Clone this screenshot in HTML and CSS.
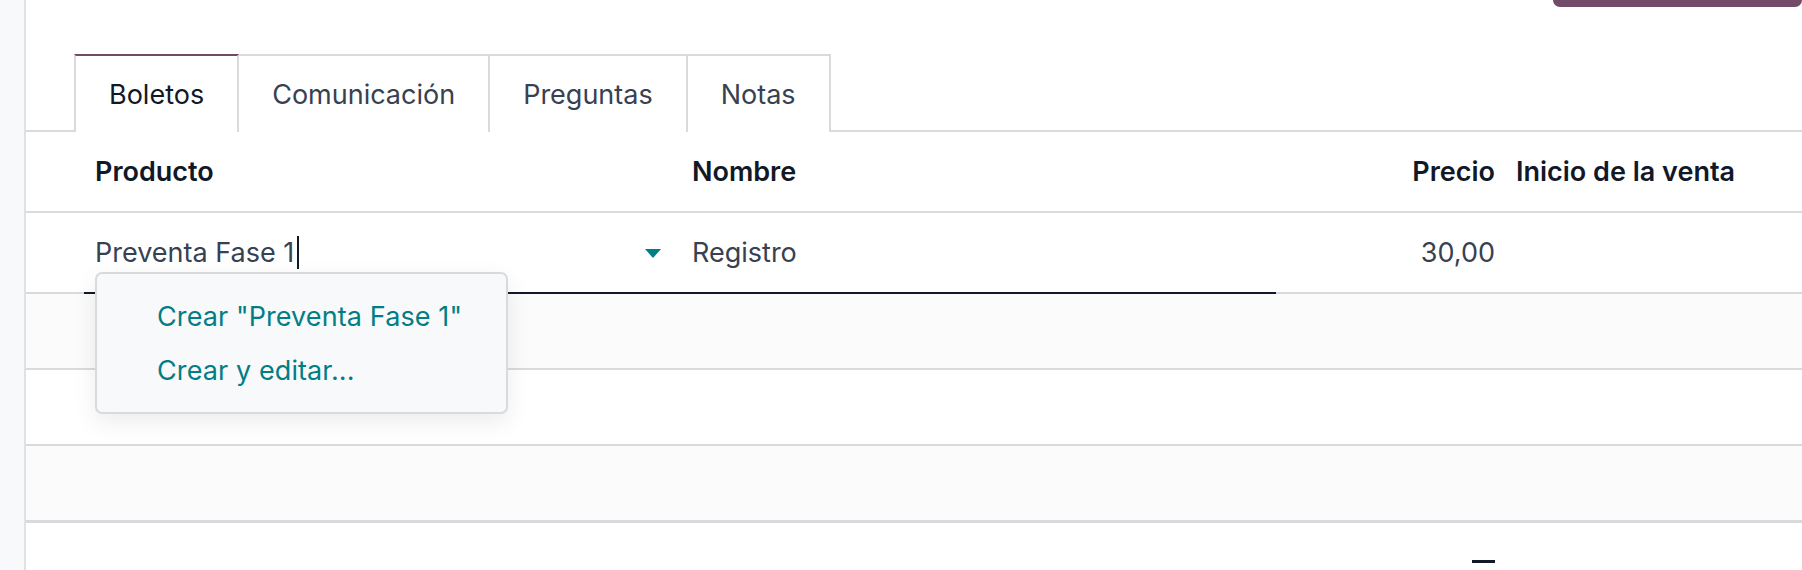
FILE: index.html
```html
<!DOCTYPE html>
<html lang="es">
<head>
<meta charset="utf-8">
<title>Boletos</title>
<link rel="stylesheet" href="styles.css">
</head>
<body>
<div class="app">
  <aside class="gutter"></aside>
  <main class="sheet">
    <div class="topbar"><span class="btn-primary"></span></div>
    <ul class="tabs">
      <li class="tab active">Boletos</li>
      <li class="tab">Comunicación</li>
      <li class="tab">Preguntas</li>
      <li class="tab">Notas</li>
    </ul>
    <div class="list">
      <div class="row head">
        <div class="cell lead"></div>
        <div class="cell c1">Producto</div>
        <div class="cell c2">Nombre</div>
        <div class="cell c3">Precio</div>
        <div class="cell c4">Inicio de la venta</div>
      </div>
      <div class="row edit">
        <div class="cell lead"></div>
        <div class="cell c1 input"><span class="val">Preventa Fase 1<span class="caret-cursor"></span></span><span class="dd-arrow"></span></div>
        <div class="cell c2 input">Registro</div>
        <div class="cell c3">30,00</div>
        <div class="cell c4"></div>
      </div>
      <div class="row empty odd">
        <div class="cell lead"></div><div class="cell c1"></div><div class="cell c2"></div><div class="cell c3"></div><div class="cell c4"></div>
      </div>
      <div class="row empty">
        <div class="cell lead"></div><div class="cell c1"></div><div class="cell c2"></div><div class="cell c3"></div><div class="cell c4"></div>
      </div>
      <div class="row empty odd last">
        <div class="cell lead"></div><div class="cell c1"></div><div class="cell c2"></div><div class="cell c3"></div><div class="cell c4"></div>
      </div>
      <div class="row foot">
        <div class="cell lead"></div><div class="cell c1"></div><div class="cell c2"></div><div class="cell c3"><span class="total-dash"></span></div><div class="cell c4"></div>
      </div>
      <div class="dropdown">
        <div class="dd-item">Crear "Preventa Fase 1"</div>
        <div class="dd-item">Crear y editar...</div>
      </div>
    </div>
  </main>
</div>
</body>
</html>
```

FILE: styles.css
```css
* { box-sizing: border-box; }
html, body { margin: 0; padding: 0; background: #fff; }
body {
  font-family: Inter, "Noto Sans", "Liberation Sans", sans-serif;
  font-size: 27px;
  color: #374151;
  overflow: hidden;
}
.app {
  display: flex;
  width: 1802px;
  height: 570px;
}
.gutter {
  width: 26px;
  flex: none;
  background: #f8f9fa;
  border-right: 2px solid #dee2e6;
}
.sheet {
  flex: 1;
  display: flex;
  flex-direction: column;
  min-width: 0;
}
.topbar {
  height: 54px;
  display: flex;
  justify-content: flex-end;
  align-items: flex-start;
}
.btn-primary {
  display: block;
  width: 249px;
  height: 7px;
  background: #714b67;
  border-radius: 0 0 7px 7px;
}
.tabs {
  list-style: none;
  margin: 0;
  padding: 0 0 0 48px;
  display: flex;
  border-bottom: 2px solid #d8dadd;
  height: 78px;
}
.tab {
  height: 78px;
  padding: 0 33px;
  display: flex;
  align-items: center;
  border: 2px solid #d8dadd;
  border-bottom: none;
  margin-left: -2px;
  color: #374151;
  background: #fff;
  line-height: 1;
}
.tab:first-child { margin-left: 0; }
.tab.active {
  color: #111827;
  border-top-color: #714b67;
  height: 78px;
  margin-bottom: -2px;
  position: relative;
  z-index: 1;
}
.list {
  position: relative;
  flex: 1;
  display: flex;
  flex-direction: column;
}
.row {
  display: grid;
  grid-template-columns: 58px 598px 594px 230px 1fr;
}
.cell {
  border-bottom: 2px solid #d8dadd;
  display: flex;
  align-items: center;
  white-space: nowrap;
}
.head .cell { height: 81px; font-weight: 600; color: #111827; }
.edit .cell { height: 81px; }
.empty .cell { height: 76px; }
.odd .cell { background: #fbfbfb; }
.last .cell { height: 77px; border-bottom-width: 3px; }
.foot .cell { border-bottom: none; height: 47px; align-items: flex-start; }
.c1 { padding-left: 11px; }
.c2 { padding-left: 10px; }
.c3 { justify-content: flex-end; padding-right: 11px; }
.c4 { padding-left: 10px; }
.edit .input { border-bottom-color: #111827; }
.edit .c1 { justify-content: space-between; padding-right: 21px; }
.val { display: flex; align-items: center; }
.caret-cursor {
  display: inline-block;
  width: 2px;
  height: 33px;
  background: #111827;
  margin-left: 3px;
}
.dd-arrow {
  width: 0;
  height: 0;
  border-left: 8px solid transparent;
  border-right: 8px solid transparent;
  border-top: 9px solid #017e84;
  margin-top: 2px;
}
.total-dash {
  display: block;
  width: 23px;
  height: 3px;
  background: #111827;
  margin-top: 37px;
}
.dropdown {
  position: absolute;
  left: 69px;
  top: 140px;
  width: 413px;
  height: 142px;
  background: #f8f9fa;
  border: 2px solid #d8dadd;
  border-radius: 7px;
  padding: 15px 0;
  box-shadow: 0 8px 24px rgba(0, 0, 0, 0.08);
  z-index: 5;
}
.dd-item {
  height: 54px;
  display: flex;
  align-items: center;
  padding-left: 60px;
  color: #017e84;
  letter-spacing: 0.1px;
}
```
